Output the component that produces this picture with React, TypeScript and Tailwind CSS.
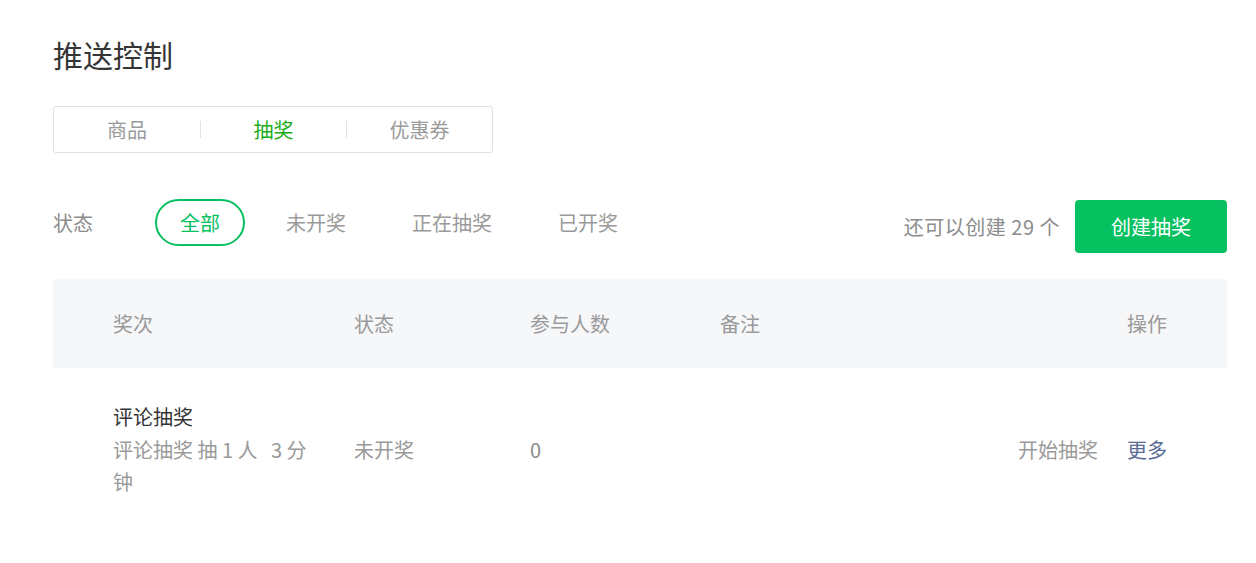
import { useState } from 'react'

const tabs = ['商品', '抽奖', '优惠券']
const filters = ['全部', '未开奖', '正在抽奖', '已开奖']

export default function App() {
  const [tab, setTab] = useState(1)
  const [filter, setFilter] = useState(0)

  return (
    <div
      className="min-h-screen bg-white pl-[53px] pr-[29px] pt-[34px] text-[#353535]"
      style={{ fontFamily: '"Noto Sans CJK SC", "Noto Sans", sans-serif' }}
    >
      {/* Title */}
      <h1 className="text-[30px] leading-[40px] font-normal">推送控制</h1>

      {/* Segmented tabs */}
      <div className="mt-[32px] flex h-[47px] w-[440px] items-center rounded-[3px] border border-[#e0e0e0]">
        {tabs.map((t, i) => (
          <div key={t} className="flex flex-1 items-center">
            {i > 0 && <span className="h-[17px] w-px bg-[#e3e3e3]" />}
            <button
              onClick={() => setTab(i)}
              className={`flex-1 text-[20px] leading-[45px] ${tab === i ? 'text-[#1aad19]' : 'text-[#9a9a9a]'}`}
            >
              {t}
            </button>
          </div>
        ))}
      </div>

      {/* Filter row */}
      <div className="mt-[46px] flex items-start justify-between">
        <div className="flex items-center">
          <span className="w-[102px] text-[20px] leading-[47px] text-[#8c8c8c]">状态</span>
          <div className="flex items-center gap-4">
            {filters.map((f, i) => (
              <button
                key={f}
                onClick={() => setFilter(i)}
                className={`h-[47px] rounded-full px-[23px] text-[20px] ${
                  filter === i ? 'border-2 border-[#07c160] text-[#07c160]' : 'border-2 border-transparent text-[#9a9a9a]'
                }`}
              >
                {f}
              </button>
            ))}
          </div>
        </div>
        <div className="mt-px flex items-center gap-[15px]">
          <span className="text-[20px] tracking-[0.5px] text-[#8c8c8c]">还可以创建 29 个</span>
          <button className="h-[53px] w-[152px] rounded-[4px] bg-[#07c160] text-[20px] text-white">创建抽奖</button>
        </div>
      </div>

      {/* Table */}
      <div className="mt-[26px]">
        <div className="grid h-[89px] grid-cols-[241px_176px_190px_1fr_auto] items-center bg-[#f6f7f9] pl-[60px] pr-[60px] text-[20px] text-[#9a9a9a]">
          <span>奖次</span>
          <span>状态</span>
          <span>参与人数</span>
          <span>备注</span>
          <span>操作</span>
        </div>
        <div className="grid grid-cols-[241px_176px_190px_1fr_auto] items-center pl-[60px] pr-[60px] pt-[33px] text-[20px] leading-[32.5px]">
          <div className="w-[212px]">
            <div className="text-[#353535]">评论抽奖</div>
            <div className="text-[#9a9a9a]">评论抽奖 抽&nbsp;1&nbsp;人&nbsp;&nbsp; 3&nbsp;分钟</div>
          </div>
          <span className="text-[#9a9a9a]">未开奖</span>
          <span className="text-[#8c8c8c]">0</span>
          <span className="text-right pr-[29px] text-[#9a9a9a]">开始抽奖</span>
          <span className="text-[#576b95]">更多</span>
        </div>
      </div>
    </div>
  )
}
